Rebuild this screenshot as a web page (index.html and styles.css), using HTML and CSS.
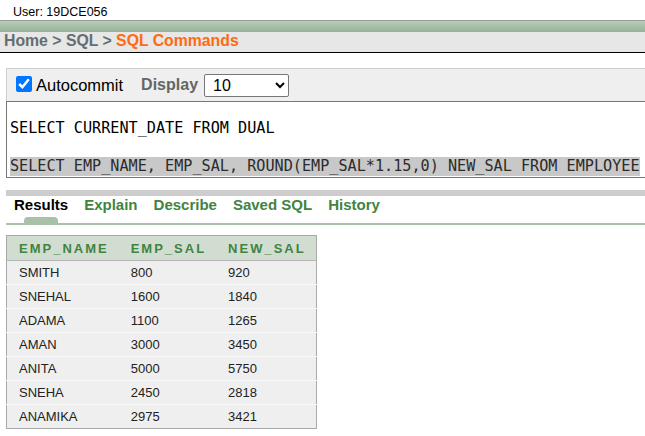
FILE: index.html
```html
<!DOCTYPE html>
<html>
<head>
<meta charset="utf-8">
<link rel="stylesheet" href="styles.css">
</head>
<body>
<div class="user">User: 19DCE056</div>
<div class="greenbar"></div>
<div class="crumbs"><span class="crumb">Home &gt; SQL &gt; </span><span class="current">SQL Commands</span></div>
<div class="main">
  <div class="toolbar">
    <input type="checkbox" class="chk" checked>
    <span class="autolabel">Autocommit</span>
    <span class="displabel">Display</span>
    <select class="sel"><option>10</option></select>
  </div>
  <div class="editor">
    <div class="line">SELECT CURRENT_DATE FROM DUAL</div>
    <div class="line"></div>
    <div class="line"><span class="hl">SELECT EMP_NAME, EMP_SAL, ROUND(EMP_SAL*1.15,0) NEW_SAL FROM EMPLOYEE</span></div>
  </div>
  <div class="graybar"></div>
  <div class="tabs">
    <span class="tab active">Results</span>
    <span class="tab">Explain</span>
    <span class="tab">Describe</span>
    <span class="tab">Saved SQL</span>
    <span class="tab">History</span>
  </div>
  <table class="results">
    <thead>
      <tr><th class="c1">EMP_NAME</th><th class="c2">EMP_SAL</th><th class="c3">NEW_SAL</th></tr>
    </thead>
    <tbody>
      <tr><td>SMITH</td><td>800</td><td>920</td></tr>
      <tr><td>SNEHAL</td><td>1600</td><td>1840</td></tr>
      <tr><td>ADAMA</td><td>1100</td><td>1265</td></tr>
      <tr><td>AMAN</td><td>3000</td><td>3450</td></tr>
      <tr><td>ANITA</td><td>5000</td><td>5750</td></tr>
      <tr><td>SNEHA</td><td>2450</td><td>2818</td></tr>
      <tr><td>ANAMIKA</td><td>2975</td><td>3421</td></tr>
    </tbody>
  </table>
</div>
</body>
</html>
```
FILE: styles.css
```css
html, body {
  margin: 0;
  padding: 0;
  background: #fff;
  overflow: hidden;
  width: 645px;
  height: 436px;
  font-family: "Liberation Sans", Arial, sans-serif;
}
.user {
  height: 16px;
  padding: 4px 0 0 13px;
  font-size: 12.5px;
  line-height: 16px;
  color: #000;
}
.greenbar {
  height: 11px;
  border-top: 1px solid #9a9a9a;
  background: linear-gradient(#b6cdb6, #98b098);
}
.crumbs {
  height: 18px;
  padding: 0 0 2px 4px;
  background: #e6e7e6;
  border-bottom: 1px solid #000;
  font-size: 15.8px;
  font-weight: bold;
  line-height: 18px;
  white-space: nowrap;
}
.crumb { color: #646e72; }
.current { color: #ff6a12; }
.main {
  margin: 15px 0 0 6px;
  width: 639px;
}
.toolbar {
  height: 32px;
  display: flex;
  align-items: center;
  padding-left: 9px;
  background: #efefef;
  border-top: 1px solid #cfcfcf;
  border-left: 1px solid #cfcfcf;
}
.chk {
  margin: 0 4px 2px 0;
  width: 16px;
  height: 16px;
  accent-color: #0075ff;
}
.autolabel {
  font-size: 16.5px;
  color: #000;
  margin-right: 18px;
}
.displabel {
  font-size: 16px;
  font-weight: bold;
  color: #666;
  margin-right: 6px;
}
.sel {
  width: 85px;
  height: 23px;
  font-family: "Liberation Sans", Arial, sans-serif;
  font-size: 16px;
  padding: 0 0 0 4px;
  border: 1px solid #767676;
  border-radius: 2px;
  background: #fff;
  color: #000;
}
.editor {
  border: 1px solid #777;
  border-right: none;
  padding: 17px 0 1px 3px;
  font-family: "DejaVu Sans Mono", monospace;
  font-size: 15.17px;
  line-height: 19px;
  color: #000;
  background: #fff;
  overflow: hidden;
}
.line {
  height: 19px;
  white-space: pre;
}
.hl {
  display: inline-block;
  background: #c8c8c8;
  color: #2b2b2b;
  line-height: 19px;
}
.graybar {
  margin-top: 12px;
  height: 6px;
  background: #cdcdcd;
}
.tabs {
  height: 27px;
  display: flex;
  gap: 16px;
  padding-left: 8px;
  border-bottom: 2px solid #a9c0a9;
  font-size: 15px;
  font-weight: bold;
  line-height: 18px;
}
.tab {
  position: relative;
  color: #3f843f;
}
.tab.active { color: #000; }
.tab.active::after {
  content: "";
  position: absolute;
  left: 10px;
  top: 21px;
  width: 34px;
  height: 6px;
  background: #a9c0a9;
  border-radius: 4px 4px 0 0;
}
.results {
  margin-top: 10px;
  border-collapse: collapse;
  border: 1px solid #a9a9a9;
  font-size: 13px;
}
.results th {
  height: 24px;
  padding: 0 10px 0 12px;
  background: #d2ddd2;
  color: #3f843f;
  font-weight: bold;
  letter-spacing: 2px;
  text-align: left;
  border-bottom: 1px solid #b5b5b5;
}
.results th.c1 { width: 89px; }
.results th.c2 { width: 75px; }
.results th.c3 { width: 75px; }
.results td {
  height: 23px;
  padding: 0 12px;
  background: #efefef;
  color: #222;
  border-top: 1px solid #fafafa;
}
.results tbody tr:first-child td { border-top: none; height: 23px; }
```
